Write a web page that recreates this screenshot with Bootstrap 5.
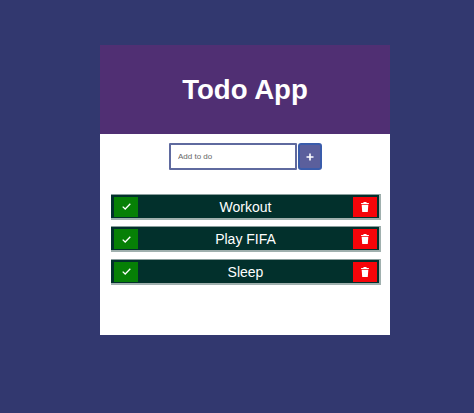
<!DOCTYPE html>
<html lang="en">
<head>
<meta charset="utf-8">
<title>Todo App</title>
<link href="https://cdn.jsdelivr.net/npm/bootstrap@5.3.0/dist/css/bootstrap.min.css" rel="stylesheet">
<style>
html, body { height: 100%; }
body { background: #32386f; font-family: "Liberation Sans", Arial, sans-serif; padding-top: 45px; }
.app-box { width: 290px; height: 290px; background: #fff; margin-left: 100px; }
.app-head { height: 89px; background: #502f73; }
.app-head h1 { color: #fff; font-size: 27.6px; font-weight: 700; margin: 1px 0 0; line-height: 1; font-family: "Liberation Sans", Arial, sans-serif; }
.add-row { margin-top: 9px; gap: 1px; }
.add-input { width: 128px; height: 27px; border: 2px solid #5f6a9f; border-radius: 1px; padding: 0 7.500px; font-size: 8px; background: #fff; }
.add-input::placeholder { color: #666; opacity: 1; }
.add-btn { width: 24px; height: 27px; padding: 0; background: #5b5f9c; border: 2px solid #3a5cab; border-radius: 3px; color: #fff; }
.todo-list { margin: 23.500px 9px 0 11px; gap: 6.500px; }
.todo-row { height: 26px; background: #02302c; border-top: 1px solid #8a9e9c; border-right: 2px solid #a0b0ae; border-bottom: 2px solid #a0b0ae; padding: 2px 2px 1px 3px; color: #fff; font-size: 14px; }
.todo-text { line-height: 1; }
.act-btn { width: 24px; height: 20px; padding: 0; border: 0; border-radius: 0; flex: none; }
.act-ok { background: #068006; }
.act-del { background: #f60409; }
</style>
</head>
<body>
<div class="app-box">
  <header class="app-head d-flex align-items-center justify-content-center"><h1>Todo App</h1></header>
  <form class="add-row d-flex justify-content-center">
    <input class="add-input" type="text" placeholder="Add to do">
    <button class="add-btn d-flex align-items-center justify-content-center" type="button" aria-label="Add">
      <svg width="8" height="8" viewBox="0 0 8 8"><path d="M4 .5v7M.5 4h7" stroke="#fff" stroke-width="1.600" fill="none"/></svg>
    </button>
  </form>
  <div class="todo-list d-flex flex-column">
    <div class="todo-row d-flex align-items-center justify-content-between">
      <button class="act-btn act-ok d-flex align-items-center justify-content-center" type="button" aria-label="Done"><svg width="9" height="7" viewBox="0 0 9 7"><path d="M.7 3.600 3.200 6 8.300 .8" stroke="#fff" stroke-width="1.300" fill="none"/></svg></button>
      <span class="todo-text">Workout</span>
      <button class="act-btn act-del d-flex align-items-center justify-content-center" type="button" aria-label="Delete"><svg width="8" height="10" viewBox="0 0 7 9"><path d="M2.300 0h2.400l.4.800H7v1H0v-1h1.900zM.5 2.400h6L6 9H1z" fill="#fff"/></svg></button>
    </div>
    <div class="todo-row d-flex align-items-center justify-content-between">
      <button class="act-btn act-ok d-flex align-items-center justify-content-center" type="button" aria-label="Done"><svg width="9" height="7" viewBox="0 0 9 7"><path d="M.7 3.600 3.200 6 8.300 .8" stroke="#fff" stroke-width="1.300" fill="none"/></svg></button>
      <span class="todo-text">Play FIFA</span>
      <button class="act-btn act-del d-flex align-items-center justify-content-center" type="button" aria-label="Delete"><svg width="8" height="10" viewBox="0 0 7 9"><path d="M2.300 0h2.400l.4.800H7v1H0v-1h1.900zM.5 2.400h6L6 9H1z" fill="#fff"/></svg></button>
    </div>
    <div class="todo-row d-flex align-items-center justify-content-between">
      <button class="act-btn act-ok d-flex align-items-center justify-content-center" type="button" aria-label="Done"><svg width="9" height="7" viewBox="0 0 9 7"><path d="M.7 3.600 3.200 6 8.300 .8" stroke="#fff" stroke-width="1.300" fill="none"/></svg></button>
      <span class="todo-text">Sleep</span>
      <button class="act-btn act-del d-flex align-items-center justify-content-center" type="button" aria-label="Delete"><svg width="8" height="10" viewBox="0 0 7 9"><path d="M2.300 0h2.400l.4.800H7v1H0v-1h1.900zM.5 2.400h6L6 9H1z" fill="#fff"/></svg></button>
    </div>
  </div>
</div>
<script src="https://cdn.jsdelivr.net/npm/bootstrap@5.3.0/dist/js/bootstrap.bundle.min.js"></script>
</body>
</html>
